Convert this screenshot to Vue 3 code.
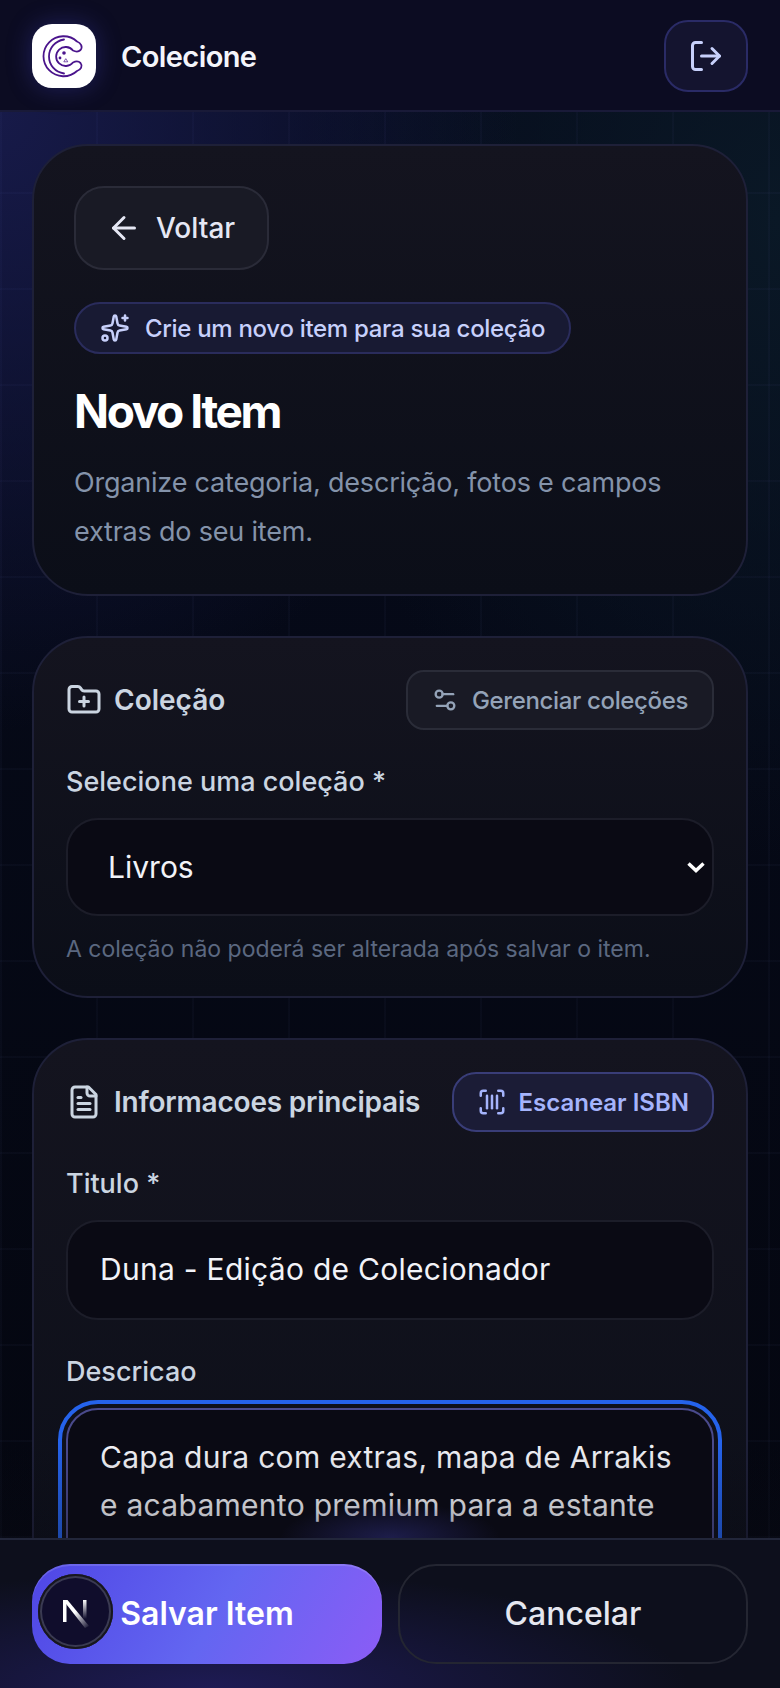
<template>
  <div class="page">
    <header class="topbar">
      <div class="brand">
        <div class="logo">
          <svg viewBox="0 0 64 64" width="64" height="64" fill="none" stroke="#4a148c" stroke-width="1.800" stroke-linecap="round" stroke-linejoin="round">
            <path d="M45 17.500A20 20 0 1 0 45 47C49 45.500 51 42 48.500 39C46 36.500 43 37.500 41 38.500A9.500 9.500 0 1 1 41 26.500C43 27.500 46 28.500 48.500 26C51 23 49 19 45 17.500Z" />
            <path d="M32 15.500C23 17 17 24 17 32.500C17 41 23 48 32 49.500" />
            <circle cx="32" cy="29" r="1.800" fill="#4a148c" stroke="none" />
            <circle cx="28" cy="34" r="1.400" fill="#4a148c" stroke="none" />
            <path d="M34 35l1.800 2.800h-3.600z" stroke-width="0.700" />
          </svg>
        </div>
        <span class="brand-name">Colecione</span>
      </div>
      <button class="logout" type="button">
        <svg class="icon" viewBox="0 0 24 24" width="36" height="36">
          <path d="M9 21H5a2 2 0 0 1-2-2V5a2 2 0 0 1 2-2h4" />
          <path d="m16 17 5-5-5-5" />
          <path d="M21 12H9" />
        </svg>
      </button>
    </header>

    <main class="content">
      <section class="card hero">
        <button class="back" type="button">
          <svg class="icon" viewBox="0 0 24 24" width="36" height="36">
            <path d="m12 19-7-7 7-7" />
            <path d="M19 12H5" />
          </svg>
          Voltar
        </button>
        <div class="badge">
          <svg class="icon" viewBox="0 0 24 24" width="30" height="30">
            <path d="M11.017 2.814a1 1 0 0 1 1.966 0l1.051 5.558a2 2 0 0 0 1.594 1.594l5.558 1.051a1 1 0 0 1 0 1.966l-5.558 1.051a2 2 0 0 0-1.594 1.594l-1.051 5.558a1 1 0 0 1-1.966 0l-1.051-5.558a2 2 0 0 0-1.594-1.594l-5.558-1.051a1 1 0 0 1 0-1.966l5.558-1.051a2 2 0 0 0 1.594-1.594z" />
            <path d="M20 2v4" />
            <path d="M22 4h-4" />
            <circle cx="4" cy="20" r="2" />
          </svg>
          Crie um novo item para sua coleção
        </div>
        <h1>Novo Item</h1>
        <p class="lead">Organize categoria, descrição, fotos e campos extras do seu item.</p>
      </section>

      <section class="card form-card">
        <div class="card-head">
          <h2>
            <svg class="icon" viewBox="0 0 24 24" width="36" height="36">
              <path d="M12 10v6" />
              <path d="M9 13h6" />
              <path d="M20 20a2 2 0 0 0 2-2V8a2 2 0 0 0-2-2h-7.900a2 2 0 0 1-1.690-.9L9.600 3.900A2 2 0 0 0 7.930 3H4a2 2 0 0 0-2 2v13a2 2 0 0 0 2 2Z" />
            </svg>
            Coleção
          </h2>
          <button class="ghost" type="button">
            <svg class="icon" viewBox="0 0 24 24" width="28" height="28">
              <path d="M14 17H5" />
              <path d="M19 7h-9" />
              <circle cx="17" cy="17" r="3" />
              <circle cx="7" cy="7" r="3" />
            </svg>
            Gerenciar coleções
          </button>
        </div>
        <label class="field-label" for="colecao">Selecione uma coleção *</label>
        <div class="select-wrap">
          <select id="colecao" v-model="colecao" class="control select">
            <option>Livros</option>
            <option>Filmes</option>
            <option>Jogos</option>
          </select>
          <svg class="chevron" viewBox="0 0 20 12" width="20" height="12">
            <path d="M2.500 2.500 10 9.500l7.500-7" />
          </svg>
        </div>
        <p class="hint">A coleção não poderá ser alterada após salvar o item.</p>
      </section>

      <section class="card form-card">
        <div class="card-head">
          <h2 class="tight">
            <svg class="icon" viewBox="0 0 24 24" width="36" height="36">
              <path d="M15 2H6a2 2 0 0 0-2 2v16a2 2 0 0 0 2 2h12a2 2 0 0 0 2-2V7Z" />
              <path d="M14 2v4a2 2 0 0 0 2 2h4" />
              <path d="M10 9H8" />
              <path d="M16 13H8" />
              <path d="M16 17H8" />
            </svg>
            Informacoes principais
          </h2>
          <button class="scan" type="button">
            <svg class="icon" viewBox="0 0 24 24" width="30" height="30">
              <path d="M3 7V5a2 2 0 0 1 2-2h2" />
              <path d="M17 3h2a2 2 0 0 1 2 2v2" />
              <path d="M21 17v2a2 2 0 0 1-2 2h-2" />
              <path d="M7 21H5a2 2 0 0 1-2-2v-2" />
              <path d="M8 7v10" />
              <path d="M12 7v10" />
              <path d="M16 7v10" />
            </svg>
            Escanear ISBN
          </button>
        </div>
        <label class="field-label" for="titulo">Titulo *</label>
        <input id="titulo" v-model="titulo" class="control input" type="text" />
        <label class="field-label second" for="descricao">Descricao</label>
        <textarea id="descricao" v-model="descricao" class="control textarea" rows="5"></textarea>
      </section>
    </main>

    <footer class="actions">
      <button class="save" type="button">Salvar Item</button>
      <button class="cancel" type="button">Cancelar</button>
      <div class="dev-badge">
        <svg viewBox="0 0 75 75" width="75" height="75">
          <defs>
            <linearGradient id="diag" x1="0" y1="0" x2="1" y2="1">
              <stop offset="0.450" stop-color="#ffffff" />
              <stop offset="1" stop-color="#ffffff" stop-opacity="0" />
            </linearGradient>
            <linearGradient id="bar" x1="0" y1="0" x2="0" y2="1">
              <stop offset="0" stop-color="#ffffff" />
              <stop offset="1" stop-color="#ffffff" stop-opacity="0" />
            </linearGradient>
          </defs>
          <rect x="25" y="26" width="3.500" height="22" fill="#fff" />
          <polygon points="25,26 29.500,26 51,52 47,54" fill="url(#diag)" />
          <rect x="45" y="26" width="3.500" height="19" fill="url(#bar)" />
        </svg>
      </div>
    </footer>
  </div>
</template>

<script setup>
import { ref } from 'vue'

const colecao = ref('Livros')
const titulo = ref('Duna - Edição de Colecionador')
const descricao = ref('Capa dura com extras, mapa de Arrakis e acabamento premium para a estante')
</script>

<style>
html,
body {
  margin: 0;
  background: #04060f;
}
</style>

<style scoped>
.page {
  position: relative;
  display: flex;
  flex-direction: column;
  width: 780px;
  height: 1688px;
  overflow: hidden;
  font-family: Inter, "Noto Sans", sans-serif;
  color: #e5e7f0;
  background-color: #04060f;
  background-image:
    linear-gradient(rgba(120, 130, 220, 0.035) 2px, transparent 2px),
    linear-gradient(90deg, rgba(120, 130, 220, 0.035) 2px, transparent 2px),
    radial-gradient(520px 620px at 0 110px, #171a49 0%, rgba(23, 26, 73, 0) 100%),
    radial-gradient(480px 640px at 780px 220px, #0a1826 0%, rgba(10, 24, 38, 0) 100%),
    linear-gradient(180deg, #060b1c 0%, #04060f 100%);
  background-size: 96px 96px, 96px 96px, auto, auto, auto;
}

button {
  font-family: inherit;
  cursor: pointer;
  white-space: nowrap;
}

.icon {
  flex-shrink: 0;
  fill: none;
  stroke: currentColor;
  stroke-width: 2;
  stroke-linecap: round;
  stroke-linejoin: round;
}

.topbar {
  flex-shrink: 0;
  display: flex;
  align-items: center;
  justify-content: space-between;
  box-sizing: border-box;
  height: 112px;
  padding: 2px 32px 0;
  background: #0c0c22;
  border-bottom: 2px solid #191a38;
}

.brand {
  display: flex;
  align-items: center;
  gap: 25px;
}

.logo {
  width: 64px;
  height: 64px;
  border-radius: 20px;
  background: #fff;
  box-shadow: 0 0 24px rgba(70, 70, 200, 0.35);
}

.logo svg {
  display: block;
}

.brand-name {
  font-size: 29px;
  font-weight: 600;
  letter-spacing: -0.6px;
  color: #f4f5fb;
}

.logout {
  display: flex;
  align-items: center;
  justify-content: center;
  width: 84px;
  height: 72px;
  padding: 0;
  border: 2px solid #2a2b66;
  border-radius: 24px;
  background: #14142f;
  color: #c7d0fb;
}

.content {
  flex: 1;
  min-height: 0;
  overflow: hidden;
  display: flex;
  flex-direction: column;
  gap: 40px;
  padding: 32px 32px 0;
}

.card {
  flex-shrink: 0;
  border: 2px solid #1e2038;
  border-radius: 56px;
  background: linear-gradient(180deg, #14141f 0%, #0b0e18 100%);
}

.hero {
  padding: 40px 40px 38px;
}

.back {
  display: inline-flex;
  align-items: center;
  gap: 14px;
  height: 84px;
  padding: 0 32px 0 30px;
  border: 2px solid #2a2b38;
  border-radius: 30px;
  background: #191a25;
  color: #e5e7f4;
  font-size: 28px;
  font-weight: 500;
}

.badge {
  display: flex;
  align-items: center;
  gap: 15px;
  width: fit-content;
  box-sizing: border-box;
  height: 52px;
  margin-top: 32px;
  padding: 0 24px;
  border: 2px solid #2a2c5c;
  border-radius: 26px;
  background: #181a33;
  color: #c7d0fb;
  font-size: 24px;
  font-weight: 500;
  letter-spacing: -0.3px;
}

h1 {
  margin: 28px 0 18px;
  font-size: 46px;
  line-height: 58px;
  font-weight: 700;
  letter-spacing: -2.4px;
  color: #fff;
}

.lead {
  margin: 0;
  font-size: 27px;
  line-height: 49px;
  letter-spacing: -0.2px;
  color: #8493aa;
}

.form-card {
  padding: 32px;
}

.card-head {
  display: flex;
  align-items: center;
  justify-content: space-between;
  gap: 16px;
}

h2 {
  display: flex;
  align-items: center;
  gap: 12px;
  margin: 0;
  white-space: nowrap;
  font-size: 28px;
  font-weight: 600;
  color: #cbd5e1;
}

h2.tight {
  letter-spacing: -0.2px;
}

.ghost,
.scan {
  display: flex;
  align-items: center;
  box-sizing: border-box;
  height: 60px;
  border-radius: 18px;
  font-size: 24px;
}

.ghost {
  gap: 13px;
  padding: 0 24px 0 23px;
  border: 2px solid #2a2c38;
  background: #191a25;
  color: #94a3b8;
  font-weight: 500;
  letter-spacing: -0.36px;
}

.scan {
  gap: 12px;
  padding: 0 23px;
  border: 2px solid #393d78;
  border-radius: 24px;
  background: #1b1c36;
  color: #a5b4fc;
  font-weight: 600;
}

.field-label {
  display: block;
  margin: 32px 0 16px;
  font-size: 27px;
  line-height: 40px;
  font-weight: 500;
  color: #cbd5e1;
}

.control {
  display: block;
  box-sizing: border-box;
  width: 100%;
  border: 2px solid #1c1d29;
  border-radius: 32px;
  background: #0a0a14;
  color: #f2f3f8;
  font-family: inherit;
  font-size: 30px;
  letter-spacing: 0.28px;
  outline: none;
}

.select-wrap {
  position: relative;
}

.select {
  height: 98px;
  padding: 0 0 0 40px;
  appearance: none;
  letter-spacing: 0;
}

.chevron {
  position: absolute;
  right: 8px;
  top: 43px;
  fill: none;
  stroke: #fff;
  stroke-width: 3.500;
  pointer-events: none;
}

.hint {
  margin: 18px 0 0;
  font-size: 23px;
  line-height: 30px;
  color: #5b6880;
}

.input {
  height: 100px;
  padding: 0 32px 2px;
}

.textarea {
  height: 240px;
  padding: 23px 32px;
  line-height: 48px;
  resize: none;
  border-color: #4a4a8c;
  outline: 4px solid #2563eb;
  outline-offset: 4px;
}

.actions {
  position: absolute;
  left: 0;
  right: 0;
  bottom: 0;
  display: grid;
  grid-template-columns: 1fr 1fr;
  gap: 16px;
  box-sizing: border-box;
  height: 150px;
  padding: 24px 32px;
  border-top: 2px solid #22263a;
  background:
    radial-gradient(480px 120px at 210px 150px, #1e1b55 0%, rgba(30, 27, 85, 0) 100%),
    #0d0f1c;
}

/* fade e brilho sobre o conteudo que passa por tras da barra */
.actions::before {
  content: "";
  position: absolute;
  left: 0;
  right: 0;
  bottom: 100%;
  height: 96px;
  margin-bottom: 2px;
  pointer-events: none;
  background:
    radial-gradient(110px 36px at 390px 100%, rgba(45, 45, 120, 0.55) 0%, rgba(45, 45, 120, 0) 100%),
    linear-gradient(180deg, rgba(10, 10, 20, 0) 0%, rgba(10, 10, 20, 0.3) 100%);
}

.save,
.cancel {
  height: 100px;
  padding: 0 0 2px;
  border-radius: 38px;
  font-size: 32px;
}

.save {
  border: none;
  background: linear-gradient(120deg, #4f46e5 0%, #6366f1 52%, #8b5cf6 100%);
  color: #fff;
  font-weight: 600;
  box-shadow: inset 0 2px 0 rgba(255, 255, 255, 0.14);
}

.cancel {
  border: 2px solid #242632;
  background: transparent;
  color: #e5e7f0;
  font-weight: 500;
}

/* indicador por cima do botao */
.dev-badge {
  position: absolute;
  left: 38px;
  top: 34px;
  width: 75px;
  height: 75px;
  box-sizing: border-box;
  border-radius: 50%;
  background: #100d2c;
  box-shadow: inset 0 0 0 2px #17161f, inset 0 0 0 4px #3a3a52;
}

.dev-badge svg {
  display: block;
}
</style>
